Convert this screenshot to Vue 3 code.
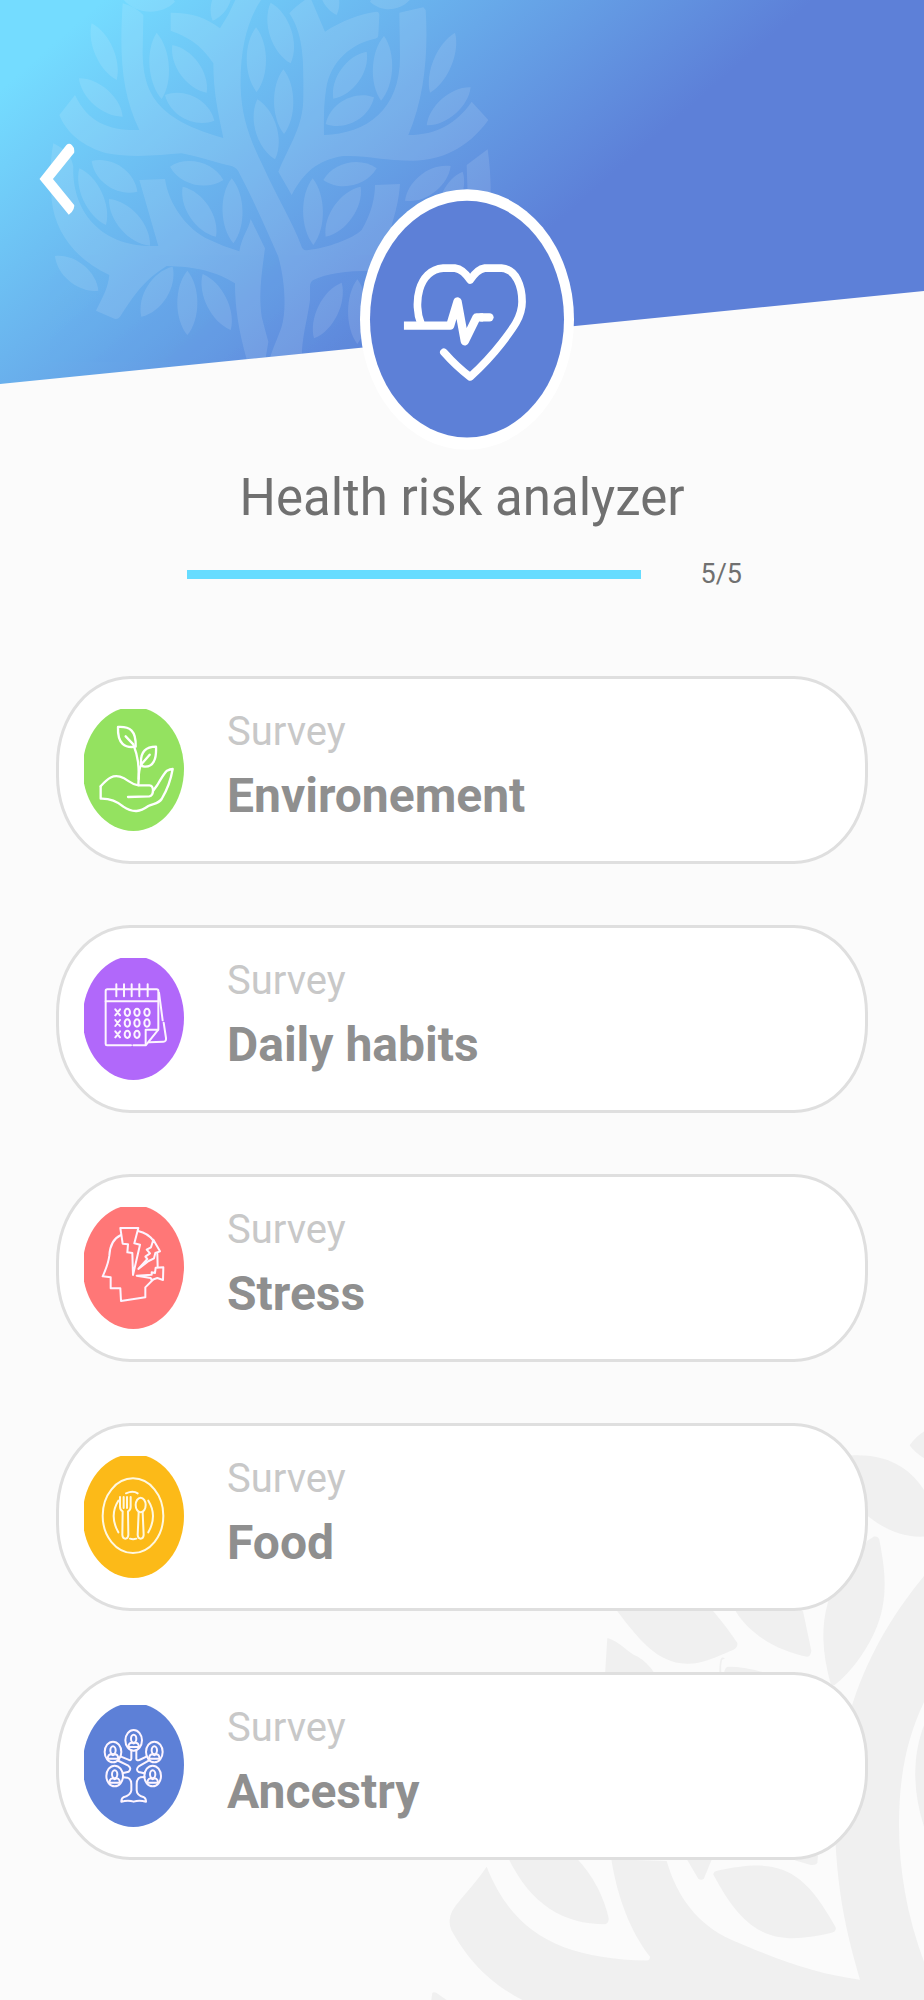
<script setup>
const surveys = [
  { id: 'environment', name: 'Environement' },
  { id: 'habits', name: 'Daily habits' },
  { id: 'stress', name: 'Stress' },
  { id: 'food', name: 'Food' },
  { id: 'ancestry', name: 'Ancestry' },
]

const colors = {
  environment: '#94e260',
  habits: '#b168fa',
  stress: '#ff7777',
  food: '#fcba18',
  ancestry: '#5d80d7',
}

// A leaf between two tips, with the given half width.
function leaf([x1, y1, x2, y2, half]) {
  const dx = x2 - x1
  const dy = y2 - y1
  const len = Math.hypot(dx, dy)
  const w = half / 0.75
  const nx = (-dy / len) * w
  const ny = (dx / len) * w
  const at = (t, s) => `${Math.round(x1 + dx * t + nx * s)} ${Math.round(y1 + dy * t + ny * s)}`
  return `M${x1} ${y1}C${at(0.25, 1)} ${at(0.75, 1)} ${x2} ${y2}C${at(0.75, -1)} ${at(0.25, -1)} ${x1} ${y1}Z`
}

const leaves = [
  [275, 70, 350, 240, 28], [237, 235, 368, 350, 30], [470, 98, 485, 297, 29],
  [517, 135, 620, 278, 32], [495, 285, 643, 362, 36], [768, 82, 770, 276, 29],
  [812, 8, 872, 190, 33], [850, 208, 852, 402, 29], [772, 298, 825, 478, 32],
  [1100, 155, 1000, 296, 32], [1152, 108, 1143, 302, 29], [1122, 292, 977, 372, 36],
  [1365, 98, 1290, 278, 28], [1412, 262, 1280, 376, 30], [275, 483, 412, 575, 35],
  [238, 505, 318, 675, 30], [327, 597, 450, 737, 33], [510, 500, 670, 540, 34],
  [548, 560, 648, 710, 32], [695, 535, 700, 730, 30], [1130, 505, 970, 540, 34],
  [938, 535, 940, 735, 30], [1082, 560, 977, 710, 32], [1352, 498, 1215, 602, 33],
  [165, 768, 295, 872, 32], [518, 800, 424, 950, 33], [562, 812, 562, 1005, 30],
  [608, 822, 692, 990, 31], [1025, 848, 942, 1015, 31], [1072, 838, 1072, 1032, 28],
  [1388, 515, 1320, 660, 28], [365, -8, 525, 5, 36], [690, -60, 638, 62, 26],
  [965, -80, 1010, 45, 26], [1110, 5, 1240, -15, 32],
].map(leaf)

const days = [
  [172, 191], [201, 191], [231, 191],
  [172, 223], [201, 223], [231, 223],
  [172, 257], [201, 257],
]
const people = [[191, 138], [129, 173], [253, 173], [134, 245], [248, 245]]
</script>

<template>
  <main class="page">
    <svg class="backdrop" viewBox="0 0 1500 1568" preserveAspectRatio="none" aria-hidden="true">
      <path d="M1457 118Q1475 95 1500 82V152Q1470 135 1457 118Z" />
      <path d="M1280 145C1380 140 1450 170 1500 235V357C1440 360 1385 340 1335 306L1200 200Z" />
      <path d="M1330 368L1350 357Q1362 355 1366 365C1380 430 1400 520 1350 610C1320 665 1280 710 1232 745Q1222 748 1218 735C1195 660 1190 590 1213 525Z" />
      <path d="M580 552L700 500L868 552C900 585 925 615 940 635Q942 645 930 652C870 675 830 690 790 689C700 690 640 620 580 552Z" />
      <path d="M935 552L1000 500L1137 552L1162 655Q1160 670 1150 671C1060 655 980 615 935 552Z" />
      <path d="M550 622C590 632 610 660 640 670Q670 685 690 712L543 720Z" />
      <path d="M900 715Q903 697 912 697Q970 697 1030 715Z" />
      <path d="M886 712Q886 670 897 673L903 676L895 678Q890 690 892 712Z" />
      <path d="M1500 460C1420 545 1340 650 1285 795L1235 1165C1245 1310 1270 1400 1308 1515C1180 1500 1080 1470 920 1410C820 1370 760 1300 728 1205L562 1200C580 1300 620 1390 678 1455Q678 1464 668 1465C420 1460 270 1400 188 1220C150 1270 110 1300 85 1335Q70 1360 82 1385C130 1460 190 1520 295 1568H1500V1468C1450 1350 1425 1230 1425 1110C1425 980 1450 880 1500 790Z" />
      <path d="M1500 850C1465 930 1465 1020 1500 1115Z" />
      <path d="M252 1195H455C510 1245 540 1300 554 1355Q554 1368 543 1370C420 1370 320 1320 252 1195Z" />
      <path d="M785 1195H866L840 1250Q832 1258 822 1250Z" />
      <path d="M868 1240Q868 1232 880 1230C1050 1200 1130 1210 1235 1378Q1238 1390 1220 1393C1060 1425 970 1410 868 1240Z" />
      <path d="M1112 1203L1182 1190L1180 1210Q1175 1217 1160 1215Z" />
      <path d="M22 1568L25 1550Q28 1545 38 1550L68 1568Z" />
    </svg>

    <header class="hero">
      <svg class="hero-art" viewBox="0 0 924 384" preserveAspectRatio="none" aria-hidden="true">
        <defs>
          <linearGradient id="sky" gradientUnits="userSpaceOnUse" x1="44" y1="51" x2="350" y2="403">
            <stop offset="0" stop-color="#74dcff" />
            <stop offset="1" stop-color="#5d80d8" />
          </linearGradient>
          <clipPath id="slope"><path d="M0 0H924V291L0 384Z" /></clipPath>
        </defs>
        <g clip-path="url(#slope)">
          <rect width="924" height="384" fill="url(#sky)" />
          <g transform="scale(.33333)" fill="#fff" opacity=".11">
            <path d="M225 285C265 370 330 392 418 390C365 280 358 170 368 10Q405 20 430 45L428 160C430 290 480 360 670 414C655 340 640 280 640 190C600 130 560 110 512 92V38C580 38 620 55 660 85Q690 40 710 -10H790C740 60 720 150 722 260C724 350 750 420 790 500C830 590 880 670 903 735Q908 755 925 750C980 745 1060 715 1085 690C1115 640 1125 590 1125 555L1200 552C1195 620 1180 650 1170 700L1110 812C1040 812 980 820 940 840Q930 845 930 860V900C920 970 905 1010 905 1080H808C820 1040 835 1010 845 980C860 930 855 840 835 770C800 690 760 600 718 520Q712 504 695 498C650 490 600 470 545 460C480 465 400 475 320 460C250 440 200 400 178 345Z" />
            <path d="M875 585L835 515C870 430 910 380 910 290C910 200 915 110 868 40Q890 15 930 -10L975 95C1020 65 1080 40 1130 35Q1138 36 1138 45L1135 105Q1135 115 1122 117C1060 130 990 180 978 270C970 320 972 370 972 405C1100 400 1200 330 1200 170L1198 38Q1235 30 1270 22L1277 30C1285 150 1275 290 1225 405C1310 405 1370 370 1415 305L1465 360C1400 450 1320 480 1240 482C1150 482 1100 465 1030 468C950 480 910 520 875 585Z" />
            <path d="M752 657L795 745C785 820 775 880 785 950Q795 990 805 1025L795 1085H742C715 990 705 920 705 850C650 815 590 800 500 798C430 840 400 890 360 950Q352 960 340 955L288 932C310 890 325 860 328 825C230 780 165 700 155 600C150 540 150 480 160 430C200 450 215 470 220 500C215 620 290 745 475 738L418 540L495 537C505 610 560 690 630 720Q670 740 718 754C725 710 745 690 752 657Z" />
            <path d="M1463 448L1400 495L1405 640H1470C1475 560 1470 500 1463 448Z" />
            <path v-for="(d, i) in leaves" :key="i" :d="d" />
          </g>
        </g>
      </svg>

      <button class="back" type="button" aria-label="Back">
        <svg viewBox="117 429 106 214" aria-hidden="true">
          <path d="M118 536L198 435Q206 427 214 435Q223 443 221 458L158 536L221 613Q223 622 214 634L205 642Z" fill="#fff" />
        </svg>
      </button>

      <svg class="badge" viewBox="60 57 643 783" aria-hidden="true">
        <ellipse cx="381.5" cy="448.5" rx="321.5" ry="391.5" fill="#fff" />
        <ellipse cx="381.5" cy="447.5" rx="291.5" ry="355.5" fill="#5d80d7" />
        <g fill="none" stroke="#fff" stroke-width="23" stroke-linejoin="round">
          <path d="M243 460C220 405 232 300 310 294H345Q370 297 391 330Q412 297 435 294H485C530 297 547 350 547 395C547 440 520 475 485 520C450 565 430 585 391 621Q350 590 312 547" stroke-linecap="round" />
          <path d="M192 467H331L353 394L375 514L410 442H430" stroke-width="25" />
          <path d="M425 442H449" stroke-width="25" stroke-linecap="round" />
        </g>
      </svg>
    </header>

    <h1 class="title">Health risk analyzer</h1>

    <div class="progress">
      <progress id="completed" value="5" max="5"></progress>
      <label for="completed">5/5</label>
    </div>

    <ul class="surveys">
      <li v-for="s in surveys" :key="s.id">
        <button class="card" type="button">
          <svg class="icon" viewBox="42 28 300 366" aria-hidden="true">
            <ellipse cx="190" cy="208" rx="152" ry="186" :fill="colors[s.id]" />
            <g v-if="s.id === 'environment'" class="lines" transform="translate(0 -2)">
              <path d="M144 84C180 82 199 95 197 143C165 148 142 135 144 84Z" />
              <path d="M167 112L190 136C203 170 209 200 205 258" />
              <path d="M258 143C228 143 211 158 213 194Q214 204 226 203C250 203 260 180 258 143Z" />
              <path d="M239 167L214 196Q206 212 206 240" />
              <path d="M92 262C115 235 130 228 150 233C175 240 180 256 205 259H238Q249 260 249 274Q249 291 238 292L174 294" />
              <path d="M249 276L262 258Q283 222 291 215Q300 210 308 210C303 240 290 275 275 300C265 315 250 313 235 321Q215 335 200 336Q180 337 160 323C140 306 120 298 92 299V262" />
            </g>
            <g v-else-if="s.id === 'habits'" class="lines soft">
              <path d="M183 290H111Q107 290 107 286V127Q107 122 112 122H260Q265 122 265 127V243L227 290H190" />
              <path d="M107 158H265M139 107V143M162 107V143M185 107V143M208 107V143M233 107V143" />
              <path d="M227 288V243H264M267 132L278 215M281 222L288 268Q289 279 280 279L238 281" />
              <ellipse v-for="(d, i) in days" :key="i" :cx="d[0]" :cy="d[1]" rx="8" ry="11" />
              <path d="M136 182L150 200M150 182L136 200M136 214L150 232M150 214L136 232M136 248L150 266M150 248L136 266" />
            </g>
            <g v-else-if="s.id === 'stress'" class="lines soft" transform="translate(0 4)">
              <path d="M153 108C127 120 119 148 118 170Q115 195 98 232L122 235V268H151L153 306L226 295V265L248 243" />
              <path d="M151 87H205L193 133L210 137L189 228L187 162L172 160L174 136L158 134Z" />
              <path d="M204 96Q235 103 250 125M262 164L263 205" />
              <path d="M250 122L270 157L256 162L252 178L236 186L205 210L232 180L226 173L240 163L230 152L243 145Z" />
              <path d="M280 205L279 243L262 237L245 243L242 237L200 230L245 227V220L255 222L257 206Z" />
            </g>
            <g v-else-if="s.id === 'food'" class="lines cream">
              <ellipse cx="189" cy="207" rx="91" ry="112" />
              <path d="M168 140Q189 131 203 140M180 276Q189 279 199 276M145 162Q117 207 145 257M235 162Q263 207 235 257" />
              <path d="M150 151V180Q150 190 158 194L157 265Q158 276 166 276Q174 276 175 265L174 194Q182 190 182 180V151M161 151V184M171 151V184" />
              <ellipse cx="212" cy="175" rx="15" ry="22" />
              <path d="M206 197L203 265Q204 276 212 276Q220 276 221 265L218 197" />
            </g>
            <g v-else class="lines soft" transform="translate(0 -4)">
              <g v-for="(p, i) in people" :key="i" :transform="`translate(${p[0]} ${p[1]})`">
                <ellipse rx="25" ry="31" />
                <ellipse cy="-5" rx="8" ry="12" />
                <path d="M-16 20Q-15 7 -5 7Q0 12 5 7Q15 7 16 20Z" />
              </g>
              <path d="M184 168V193Q183 200 175 196L151 186M146 200L175 214Q186 223 176 232L160 236M159 249L172 250Q184 254 184 270V288Q182 303 160 309Q154 312 154 322Q175 316 191 322Q207 316 228 322Q228 312 222 309Q200 303 200 288V270Q200 252 212 249L224 248M223 237L206 233Q196 226 206 216L236 199M231 186L208 197Q199 200 199 193V168" />
            </g>
          </svg>
          <span class="text">
            <span class="kind">Survey</span>
            <span class="name">{{ s.name }}</span>
          </span>
        </button>
      </li>
    </ul>
  </main>
</template>

<style>
body {
  margin: 0;
  background: #fbfbfb;
}
</style>

<style scoped>
.page {
  position: relative;
  box-sizing: border-box;
  min-height: 100vh;
  padding-bottom: 140px;
  overflow: hidden;
  background: #fbfbfb;
  color: #707070;
  font-family: Roboto, "Liberation Sans", sans-serif;
}

.backdrop {
  position: absolute;
  right: 0;
  bottom: 0;
  width: 500px;
  height: 600px;
  fill: #f0f0f0;
}

.hero {
  position: relative;
  box-sizing: border-box;
  height: 384px;
  padding: 143px 39px 0;
}

.hero-art {
  position: absolute;
  inset: 0;
  width: 100%;
  height: 100%;
}

.back {
  position: relative;
  display: block;
  padding: 0;
  border: 0;
  background: none;
  cursor: pointer;
}

.back svg {
  display: block;
  width: 36px;
  height: 72px;
}

.badge {
  position: absolute;
  top: 189px;
  left: 39%;
  width: 214px;
  height: 261px;
}

.title {
  position: relative;
  margin: 82px 0 0;
  font-size: 51px;
  font-weight: 400;
  line-height: 64px;
  text-align: center;
}

.progress {
  position: relative;
  display: flex;
  align-items: center;
  gap: 60px;
  margin-top: 24px;
  padding: 0 182px 0 187px;
}

.progress progress {
  flex: 1;
  min-width: 0;
  height: 9px;
  border: 0;
  appearance: none;
  background: #e6e6e6;
}

.progress progress::-webkit-progress-bar {
  background: #e6e6e6;
}

.progress progress::-webkit-progress-value {
  background: #66dcff;
}

.progress label {
  font-size: 27px;
  line-height: 40px;
}

.surveys {
  position: relative;
  display: flex;
  flex-direction: column;
  gap: 61px;
  margin: 82px 56px 0;
  padding: 0;
  list-style: none;
}

.card {
  display: flex;
  align-items: center;
  gap: 43px;
  box-sizing: border-box;
  width: 100%;
  height: 188px;
  padding: 0 25px;
  border: 3px solid #dfdfdf;
  border-radius: 74px / 88px;
  background: #fff;
  color: #8f8f8f;
  font-family: inherit;
  text-align: left;
  cursor: pointer;
}

.icon {
  flex: none;
  width: 100px;
  height: 122px;
}

.lines {
  fill: none;
  stroke: #fff;
  stroke-width: 7;
  stroke-linecap: round;
  stroke-linejoin: round;
}

.soft {
  stroke: #fdf4ff;
  stroke-width: 6;
}

.cream {
  stroke: #fff8e0;
  stroke-width: 6;
}

.text {
  display: flex;
  flex-direction: column;
  padding-bottom: 12px;
}

.kind {
  color: #c8c8c8;
  font-size: 40px;
  line-height: 64px;
}

.name {
  font-size: 48px;
  font-weight: 700;
  line-height: 64px;
}
</style>
